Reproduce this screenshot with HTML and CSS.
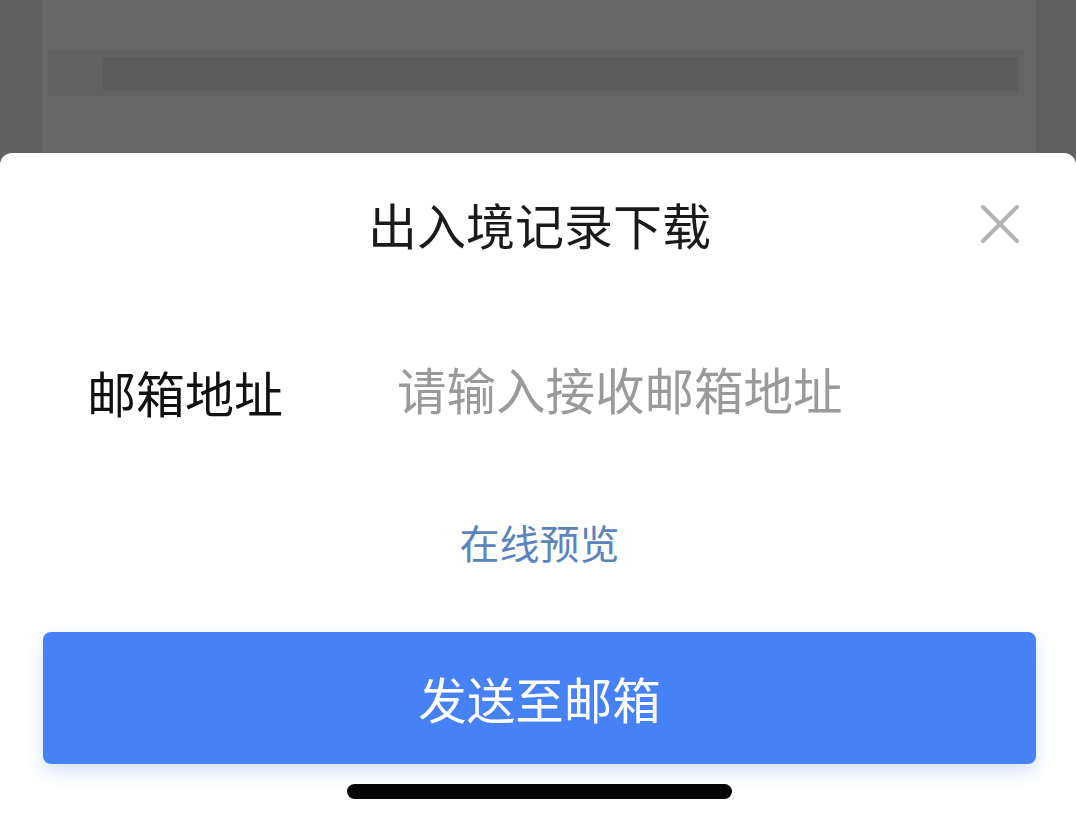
FILE: index.html
```html
<!DOCTYPE html>
<html lang="zh-CN">
<head>
<meta charset="utf-8">
<title>出入境记录下载</title>
<link rel="stylesheet" href="styles.css">
</head>
<body>
<div class="page">
  <div class="backdrop">
    <div class="bg-card">
      <div class="bg-band"><div class="bg-band-inner"></div></div>
    </div>
  </div>
  <div class="sheet">
    <div class="sheet-header">
      <span class="spacer"></span>
      <h1 class="sheet-title">出入境记录下载</h1>
      <button class="close-btn" aria-label="关闭">
        <svg width="40" height="40" viewBox="0 0 40 40"><path d="M3 3 L37 37 M37 3 L3 37" stroke="#b3b3b3" stroke-width="4" stroke-linecap="round" fill="none"/></svg>
      </button>
    </div>
    <div class="field-row">
      <label class="field-label" for="email">邮箱地址</label>
      <input class="field-input" id="email" type="text" placeholder="请输入接收邮箱地址">
    </div>
    <div class="preview-row"><a class="preview-link" href="#">在线预览</a></div>
    <button class="send-btn">发送至邮箱</button>
    <div class="home-row"><div class="home-indicator"></div></div>
  </div>
</div>
</body>
</html>
```
FILE: styles.css
```css
* { box-sizing: border-box; }
html, body { margin: 0; padding: 0; }
body {
  width: 1076px;
  height: 817px;
  overflow: hidden;
  background: #606060;
  font-family: "Noto Sans CJK SC", "Noto Sans", sans-serif;
}
.page {
  display: flex;
  flex-direction: column;
  height: 817px;
}
.backdrop {
  height: 153px;
  display: flex;
  padding: 0 40px 0 42px;
}
.bg-card {
  flex: 1;
  background: #676767;
  padding-top: 49px;
  padding-left: 6px;
  padding-right: 12px;
}
.bg-band {
  height: 47px;
  background: #626262;
  padding: 8px 6px 5px 55px;
}
.bg-band-inner {
  height: 100%;
  background: #5c5c5c;
}
.sheet {
  flex: 1;
  background: #ffffff;
  border-radius: 12px 12px 0 0;
  padding: 0 40px 0 43px;
  display: flex;
  flex-direction: column;
}
.sheet-header {
  display: grid;
  grid-template-columns: 1fr auto 1fr;
  align-items: center;
  padding-top: 43px;
  height: 98px;
}
.sheet-title {
  margin: 0;
  font-size: 49px;
  font-weight: 400;
  line-height: 54px;
  color: #1a1a1a;
}
.close-btn {
  justify-self: end;
  margin-right: 16px;
  border: none;
  background: none;
  padding: 0;
  width: 40px;
  height: 40px;
  display: flex;
}
.field-row {
  display: flex;
  align-items: center;
  margin-top: 113px;
  height: 56px;
}
.field-label {
  width: 354px;
  padding-left: 44px;
  font-size: 49px;
  line-height: 56px;
  color: #111111;
  flex-shrink: 0;
}
.field-input {
  flex: 1;
  border: none;
  outline: none;
  padding: 0;
  font-family: inherit;
  font-size: 49.5px;
  line-height: 56px;
  height: 56px;
  color: #333;
  background: transparent;
  margin-top: -6px;
}
.field-input::placeholder { color: #9a9a9a; }
.preview-row {
  display: flex;
  justify-content: center;
  margin-top: 98px;
}
.preview-link {
  font-size: 40px;
  line-height: 48px;
  color: #5b84be;
  text-decoration: none;
}
.send-btn {
  margin-top: 66px;
  height: 132px;
  border: none;
  border-radius: 8px;
  background: #4681f6;
  color: #ffffff;
  font-family: inherit;
  font-size: 48.5px;
  box-shadow: 0 8px 18px rgba(70, 129, 246, 0.22);
  padding: 0;
}
.home-row {
  display: flex;
  justify-content: center;
  margin-top: 20px;
}
.home-indicator {
  width: 385px;
  height: 15px;
  border-radius: 8px;
  background: #050505;
}
```
